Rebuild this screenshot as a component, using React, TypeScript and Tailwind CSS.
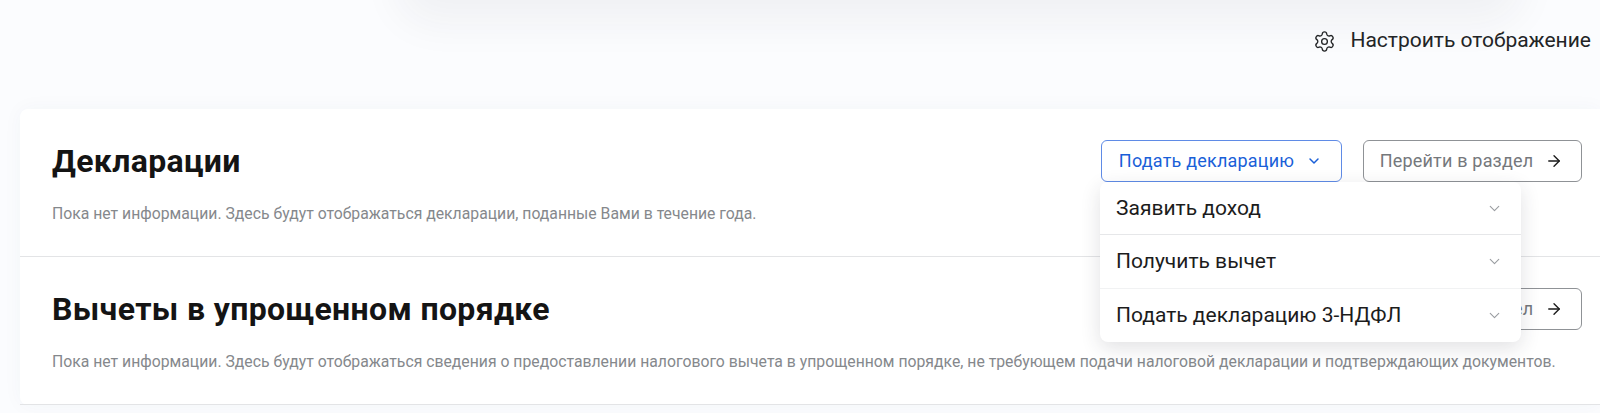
import { ArrowRight, ChevronDown, Settings } from 'lucide-react'

const menuItems = [
  { label: 'Заявить доход', row: 'h-[52px] pt-[1px]' },
  { label: 'Получить вычет', row: 'h-[54px] border-t border-[#e6e7e9]' },
  { label: 'Подать декларацию 3-НДФЛ', row: 'h-[54px] border-t border-[#f1f2f3]' },
]

function SectionLink() {
  return (
    <button className="flex h-[42px] w-[219px] items-center justify-center gap-[12px] rounded-md border border-[#8f9296] bg-white pb-[1px] text-[18px] tracking-[0.2px] text-[#75787c]">
      Перейти в раздел
      <ArrowRight size={18} strokeWidth={1.8} className="mr-[2px] text-[#1a1a1a]" />
    </button>
  )
}

export default function App() {
  return (
    <div className="relative h-[413px] w-[1600px] overflow-hidden bg-[#fbfcfe] font-['Roboto',sans-serif]">
      {/* Shadow of the header that is scrolled away */}
      <div className="absolute -top-[30px] left-[420px] h-[30px] w-[1080px] rounded-full shadow-[0_0_40px_24px_rgba(30,30,50,0.05)]" />

      {/* Display settings */}
      <div className="relative flex h-[109px] items-start justify-end pt-[29px] pr-[9px]">
        <div className="flex h-[24px] items-center gap-[14px] text-[21px] text-[#222426]">
          <Settings size={23} strokeWidth={1.4} />
          Настроить отображение
        </div>
      </div>

      {/* Card */}
      <div className="ml-5 rounded-l-lg bg-white shadow-[0_0_20px_rgba(60,70,110,0.04)]">
        <section className="relative h-[148px] border-b border-[#e3e4e6] pt-[31px] pr-[18px] pl-[32px]">
          <div className="flex items-start justify-between">
            <h2 className="mt-[2px] text-[32px] leading-[38px] font-bold tracking-[0.35px] text-[#141414]">Декларации</h2>
            <div className="flex gap-[21px]">
              <button className="flex h-[42px] w-[241px] items-center justify-center gap-[12px] rounded-md border border-[#5f8be6] bg-white pb-[1px] text-[18px] tracking-[0.2px] text-[#1a5fd8]">
                Подать декларацию
                <ChevronDown size={16} strokeWidth={2.2} className="mr-[2px]" />
              </button>
              <SectionLink />
            </div>
          </div>
          <p className="mt-[22px] text-[15.78px] leading-[20px] text-[#85888c]">
            Пока нет информации. Здесь будут отображаться декларации, поданные Вами в течение года.
          </p>
        </section>

        <section className="h-[148px] border-b border-[#e3e4e6] pt-[31px] pr-[18px] pl-[32px]">
          <div className="flex items-start justify-between">
            <h2 className="mt-[2px] text-[32px] leading-[38px] font-bold tracking-[0.35px] text-[#141414]">Вычеты в упрощенном порядке</h2>
            <SectionLink />
          </div>
          <p className="mt-[22px] text-[15.78px] leading-[20px] text-[#85888c]">
            Пока нет информации. Здесь будут отображаться сведения о предоставлении налогового вычета в упрощенном порядке, не требующем подачи налоговой декларации и подтверждающих документов.
          </p>
        </section>
      </div>

      {/* Open dropdown */}
      <div className="absolute top-[182px] left-[1100px] w-[421px] rounded-lg bg-white shadow-[0_6px_20px_rgba(40,45,60,0.14)]">
        {menuItems.map((item) => (
          <div
            key={item.label}
            className={`flex items-center justify-between pr-[18px] pl-[16px] text-[21px] text-[#1c1c1c] ${item.row}`}
          >
            {item.label}
            <ChevronDown size={17} strokeWidth={1.6} className="text-[#9a9da1]" />
          </div>
        ))}
      </div>
    </div>
  )
}
